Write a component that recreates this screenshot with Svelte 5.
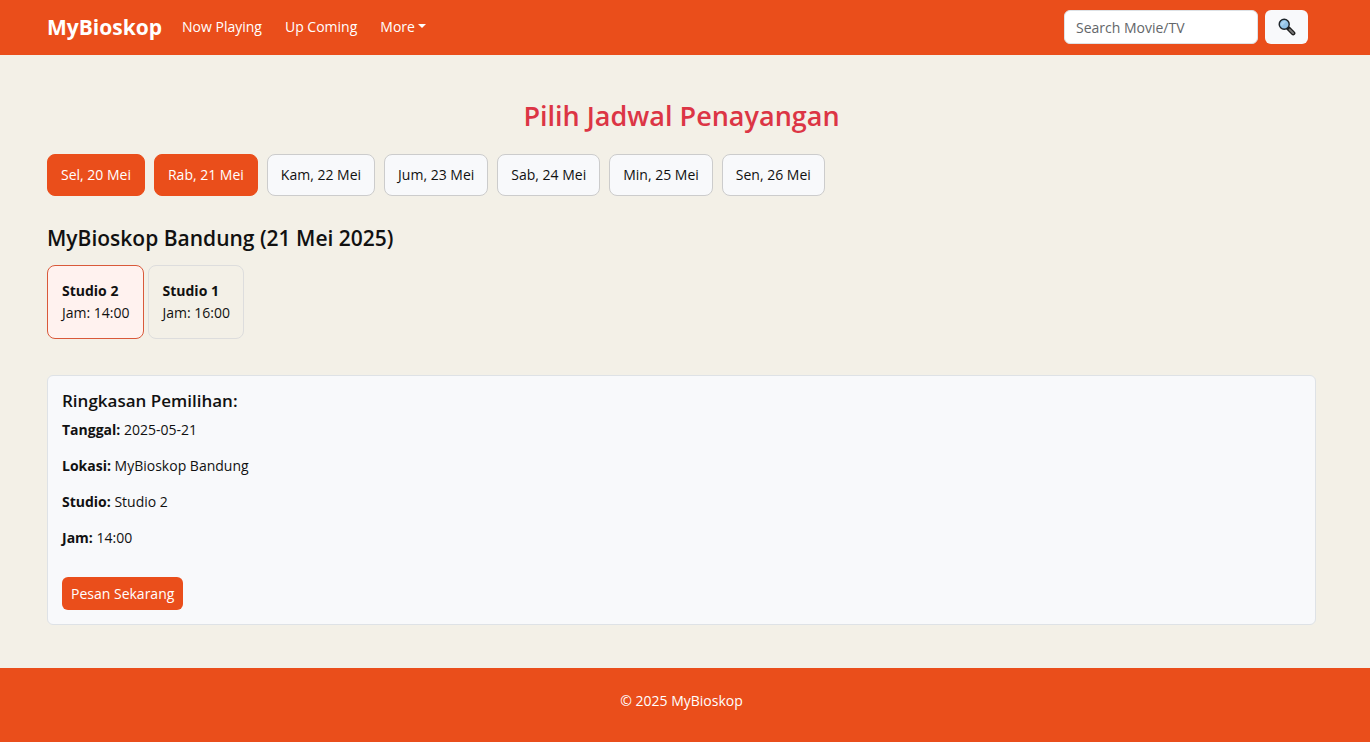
<script>
  const dates = [
    { label: 'Sel, 20 Mei', active: true },
    { label: 'Rab, 21 Mei', active: true },
    { label: 'Kam, 22 Mei', active: false },
    { label: 'Jum, 23 Mei', active: false },
    { label: 'Sab, 24 Mei', active: false },
    { label: 'Min, 25 Mei', active: false },
    { label: 'Sen, 26 Mei', active: false }
  ];

  const studios = [
    { name: 'Studio 2', time: '14:00' },
    { name: 'Studio 1', time: '16:00' }
  ];

  let selected = $state(studios[0]);
  let query = $state('');
</script>

<div class="page">
  <header class="navbar">
    <a class="brand" href="#home">MyBioskop</a>
    <nav>
      <a href="#now-playing">Now Playing</a>
      <a href="#up-coming">Up Coming</a>
      <button type="button" class="more" aria-haspopup="true">More<span class="caret"></span></button>
    </nav>
    <form class="search" role="search" onsubmit={(e) => e.preventDefault()}>
      <input type="search" placeholder="Search Movie/TV" aria-label="Search Movie/TV" bind:value={query} />
      <button type="submit" aria-label="Search">
        <svg width="18" height="18" viewBox="0 0 18 18" aria-hidden="true">
          <path d="M10.3 10.3 L15.2 15.2" stroke="#1d1d1d" stroke-width="4.4" stroke-linecap="round" />
          <path d="M11.6 11.6 L15.1 15.1" stroke="#777" stroke-width="2" stroke-linecap="round" />
          <circle cx="6.2" cy="6.2" r="5" fill="#92c3e8" stroke="#1d2429" stroke-width="1.4" />
          <path d="M3 6.6 A3.4 3.4 0 0 1 6.6 2.9 L8.4 3.4 L3.6 8.2 Z" fill="#add5f2" />
        </svg>
      </button>
    </form>
  </header>

  <main>
    <h2>Pilih Jadwal Penayangan</h2>

    <div class="dates">
      {#each dates as date}
        <button type="button" class="date" class:active={date.active}>{date.label}</button>
      {/each}
    </div>

    <h4>MyBioskop Bandung (21 Mei 2025)</h4>
    <div class="studios">
      {#each studios as studio}
        <button
          type="button"
          class="studio"
          class:selected={studio.name === selected.name}
          onclick={() => (selected = studio)}
        >
          <strong>{studio.name}</strong>
          <span>Jam: {studio.time}</span>
        </button>
      {/each}
    </div>

    <section class="summary">
      <h5>Ringkasan Pemilihan:</h5>
      <p><strong>Tanggal:</strong> 2025-05-21</p>
      <p><strong>Lokasi:</strong> MyBioskop Bandung</p>
      <p><strong>Studio:</strong> {selected.name}</p>
      <p><strong>Jam:</strong> {selected.time}</p>
      <button type="button" class="order">Pesan Sekarang</button>
    </section>
  </main>

  <footer>© 2025 MyBioskop</footer>
</div>

<style>
  :global(body) {
    margin: 0;
    background: #f3f0e7;
  }

  .page {
    min-height: 100vh;
    display: flex;
    flex-direction: column;
    color: #111;
    font-family: 'Segoe UI', 'Open Sans', 'Noto Sans', sans-serif;
    font-size: 14px;
    line-height: 22px;
  }

  .page * {
    box-sizing: border-box;
  }

  button,
  input {
    font: inherit;
    color: inherit;
  }

  button {
    cursor: pointer;
  }

  .navbar {
    display: flex;
    align-items: center;
    padding: 10px 62px 11px 47px;
    background: #ea4e1b;
    color: #fff;
  }

  .brand {
    margin-right: 13px;
    font-size: 21px;
    font-weight: 700;
    line-height: 34px;
    color: inherit;
    text-decoration: none;
  }

  nav {
    display: flex;
    gap: 9px;
  }

  nav a,
  .more {
    padding: 0 7px;
    border: 0;
    background: none;
    color: inherit;
    text-decoration: none;
  }

  .caret {
    display: inline-block;
    margin-left: 3px;
    vertical-align: 4px;
    border: 4px solid transparent;
    border-top-color: currentColor;
    border-bottom: 0;
  }

  .search {
    display: flex;
    gap: 7px;
    margin-left: auto;
  }

  .search input {
    width: 194px;
    height: 34px;
    padding: 0 11px;
    border: 1px solid #dee2e6;
    border-radius: 6px;
    background: #fff;
    color: #212529;
  }

  .search input::placeholder {
    color: #636669;
    opacity: 1;
  }

  .search button {
    display: grid;
    place-items: center;
    width: 43px;
    height: 34px;
    padding: 0;
    border: 0;
    border-radius: 6px;
    background: #f8f9fb;
  }

  main {
    flex: 1;
    padding: 43px 54px 43px 47px;
  }

  h2,
  h4,
  h5,
  p {
    margin: 0;
  }

  h2 {
    margin-bottom: 20px;
    font-size: 27px;
    font-weight: 600;
    line-height: 36px;
    text-align: center;
    color: #dc3545;
  }

  .dates {
    display: flex;
    flex-wrap: wrap;
    gap: 9px;
    margin-bottom: 29px;
  }

  .date {
    padding: 9px 13px;
    border: 1px solid #ccc;
    border-radius: 8px;
    background: #f8f9fb;
  }

  .date.active {
    border-color: #ea4e1b;
    background: #ea4e1b;
    color: #fff;
  }

  h4 {
    margin-bottom: 14px;
    font-size: 21px;
    font-weight: 600;
    line-height: 26px;
  }

  .studios {
    display: flex;
    flex-wrap: wrap;
    gap: 4px;
    margin-bottom: 36px;
  }

  .studio {
    display: flex;
    flex-direction: column;
    padding: 14px 13px 14px 14px;
    border: 1px solid #ddd;
    border-radius: 8px;
    background: none;
    text-align: left;
  }

  .studio.selected {
    border-color: #d9593a;
    background: #fff2ef;
  }

  .summary {
    padding: 14px;
    border: 1px solid #dee2e6;
    border-radius: 6px;
    background: #f8f9fb;
  }

  h5 {
    margin-bottom: 7px;
    font-size: 17px;
    font-weight: 600;
    line-height: 22px;
  }

  p {
    margin-bottom: 14px;
  }

  .order {
    display: block;
    margin-top: 28px;
    padding: 6px 9px 5px;
    border: 0;
    border-radius: 6px;
    background: #ea4e1b;
    color: #fff;
  }

  footer {
    padding: 22px 54px 30px 47px;
    background: #ea4e1b;
    color: #fff;
    text-align: center;
  }
</style>
